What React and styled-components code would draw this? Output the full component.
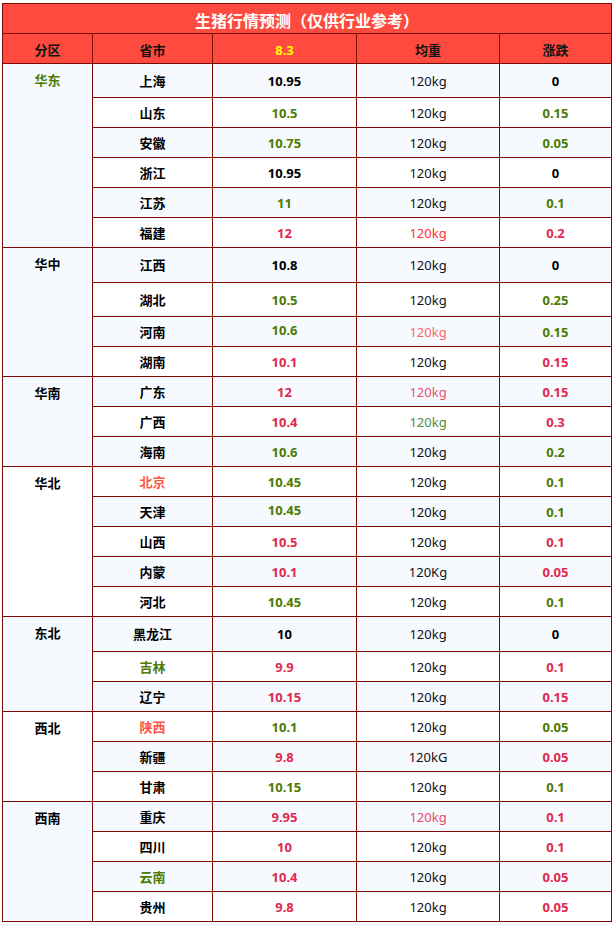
import React from "react";
import styled, { createGlobalStyle } from "styled-components";

const GREEN = "#4d7a00";
const RED = "#e2284c";
const BLACK = "#000";
const LINE = "#7d0a00";

const Global = createGlobalStyle`
  html, body { margin: 0; padding: 0; background: #fff; }
  body { font-family: "Noto Sans", "Noto Sans CJK SC", sans-serif; }
`;

const Page = styled.div`
  padding: 3px 0 0 2px;
`;

const Grid = styled.div`
  display: grid;
  grid-template-columns: 90px 120px 144px 143px 112px;
  grid-template-rows: ${(p) => p.$rows};
  width: 610px;
  border-left: 1px solid ${LINE};
  border-top: 1px solid ${LINE};
  box-sizing: border-box;
`;

const Cell = styled.div`
  box-sizing: border-box;
  border-right: 1px solid ${LINE};
  border-bottom: 1px solid ${LINE};
  display: flex;
  justify-content: center;
  align-items: center;
  font-size: 13px;
  line-height: 18px;
  background: ${(p) => (p.$light ? "#f6faff" : "#ffffff")};
  color: ${(p) => p.$color || BLACK};
  font-weight: ${(p) => (p.$bold ? 700 : 400)};
  padding-bottom: ${(p) => (p.$up ? p.$up * 2 : 0)}px;
`;

const Title = styled.div`
  grid-column: 1 / -1;
  box-sizing: border-box;
  border-right: 1px solid ${LINE};
  border-bottom: 1px solid ${LINE};
  background: #ff4b3f;
  color: #fff;
  font-size: 16px;
  font-weight: 700;
  display: flex;
  align-items: center;
  justify-content: center;
  padding-top: 2px;
`;

const Head = styled.div`
  box-sizing: border-box;
  border-right: 1px solid ${LINE};
  border-bottom: 1px solid ${LINE};
  background: #ff4b3f;
  color: ${(p) => p.$color || "#111"};
  font-size: 13px;
  font-weight: 700;
  display: flex;
  align-items: center;
  justify-content: center;
  padding-top: 2px;
`;

const Region = styled.div`
  grid-row: span ${(p) => p.$span};
  box-sizing: border-box;
  border-right: 1px solid ${LINE};
  border-bottom: 1px solid ${LINE};
  background: ${(p) => (p.$light ? "#f6faff" : "#ffffff")};
  color: ${(p) => p.$color || BLACK};
  font-size: 13px;
  font-weight: 700;
  line-height: 20px;
  padding-top: 6px;
  text-align: center;
`;

const g = GREEN, r = RED, k = BLACK;

const groups = [
  {
    name: "华东", color: GREEN,
    rows: [
      ["上海", k, "10.95", k, "120kg", null, "0", k, 34],
      ["山东", k, "10.5", g, "120kg", null, "0.15", g],
      ["安徽", k, "10.75", g, "120kg", null, "0.05", g],
      ["浙江", k, "10.95", k, "120kg", null, "0", k],
      ["江苏", k, "11", g, "120kg", null, "0.1", g],
      ["福建", k, "12", r, "120kg", "#ff2f3c", "0.2", r],
    ],
  },
  {
    name: "华中",
    rows: [
      ["江西", k, "10.8", k, "120kg", null, "0", k, 35],
      ["湖北", k, "10.5", g, "120kg", null, "0.25", g, 34],
      ["河南", k, "10.6", g, "120kg", "#ff6464", "0.15", g, 30, 2],
      ["湖南", k, "10.1", r, "120kg", null, "0.15", r],
    ],
  },
  {
    name: "华南",
    rows: [
      ["广东", k, "12", r, "120kg", "#e6506c", "0.15", r],
      ["广西", k, "10.4", r, "120kg", "#4f8a3a", "0.3", r],
      ["海南", k, "10.6", g, "120kg", null, "0.2", g],
    ],
  },
  {
    name: "华北",
    rows: [
      ["北京", "#ff5544", "10.45", g, "120kg", null, "0.1", g],
      ["天津", k, "10.45", g, "120kg", null, "0.1", g, 30, 2],
      ["山西", k, "10.5", r, "120kg", null, "0.1", r],
      ["内蒙", k, "10.1", r, "120Kg", null, "0.05", r],
      ["河北", k, "10.45", g, "120kg", null, "0.1", g],
    ],
  },
  {
    name: "东北",
    rows: [
      ["黑龙江", k, "10", k, "120kg", null, "0", k, 35],
      ["吉林", g, "9.9", r, "120kg", null, "0.1", r],
      ["辽宁", k, "10.15", r, "120kg", null, "0.15", r],
    ],
  },
  {
    name: "西北",
    rows: [
      ["陕西", "#ff5544", "10.1", g, "120kg", null, "0.05", g],
      ["新疆", k, "9.8", r, "120kG", null, "0.05", r],
      ["甘肃", k, "10.15", g, "120kg", null, "0.1", g],
    ],
  },
  {
    name: "西南",
    rows: [
      ["重庆", k, "9.95", r, "120kg", "#e8466a", "0.1", r],
      ["四川", k, "10", r, "120kg", null, "0.1", r],
      ["云南", g, "10.4", r, "120kg", null, "0.05", r],
      ["贵州", k, "9.8", r, "120kg", null, "0.05", r],
    ],
  },
];

export default function App() {
  const heights = ["30px", "30px"];
  const cells = [];
  let idx = 0;
  groups.forEach((grp) => {
    grp.rows.forEach((row, i) => {
      idx += 1;
      const light = idx % 2 === 1;
      const [prov, pc, price, prc, w, wc, chg, cc, h = 30, up = 0] = row;
      heights.push(`${h}px`);
      if (i === 0) {
        cells.push(
          <Region key={`r${idx}`} $span={grp.rows.length} $light={light} $color={grp.color}>
            {grp.name}
          </Region>
        );
      }
      cells.push(
        <Cell key={`p${idx}`} $light={light} $bold $color={pc}>{prov}</Cell>,
        <Cell key={`v${idx}`} $light={light} $bold $color={prc} $up={up}>{price}</Cell>,
        <Cell key={`w${idx}`} $light={light} $color={wc || "#111"}>{w}</Cell>,
        <Cell key={`c${idx}`} $light={light} $bold $color={cc}>{chg}</Cell>
      );
    });
  });

  return (
    <Page>
      <Global />
      <Grid $rows={heights.join(" ")}>
        <Title>生猪行情预测（仅供行业参考）</Title>
        <Head>分区</Head>
        <Head>省市</Head>
        <Head $color="#ffff00">8.3</Head>
        <Head>均重</Head>
        <Head>涨跌</Head>
        {cells}
      </Grid>
    </Page>
  );
}
